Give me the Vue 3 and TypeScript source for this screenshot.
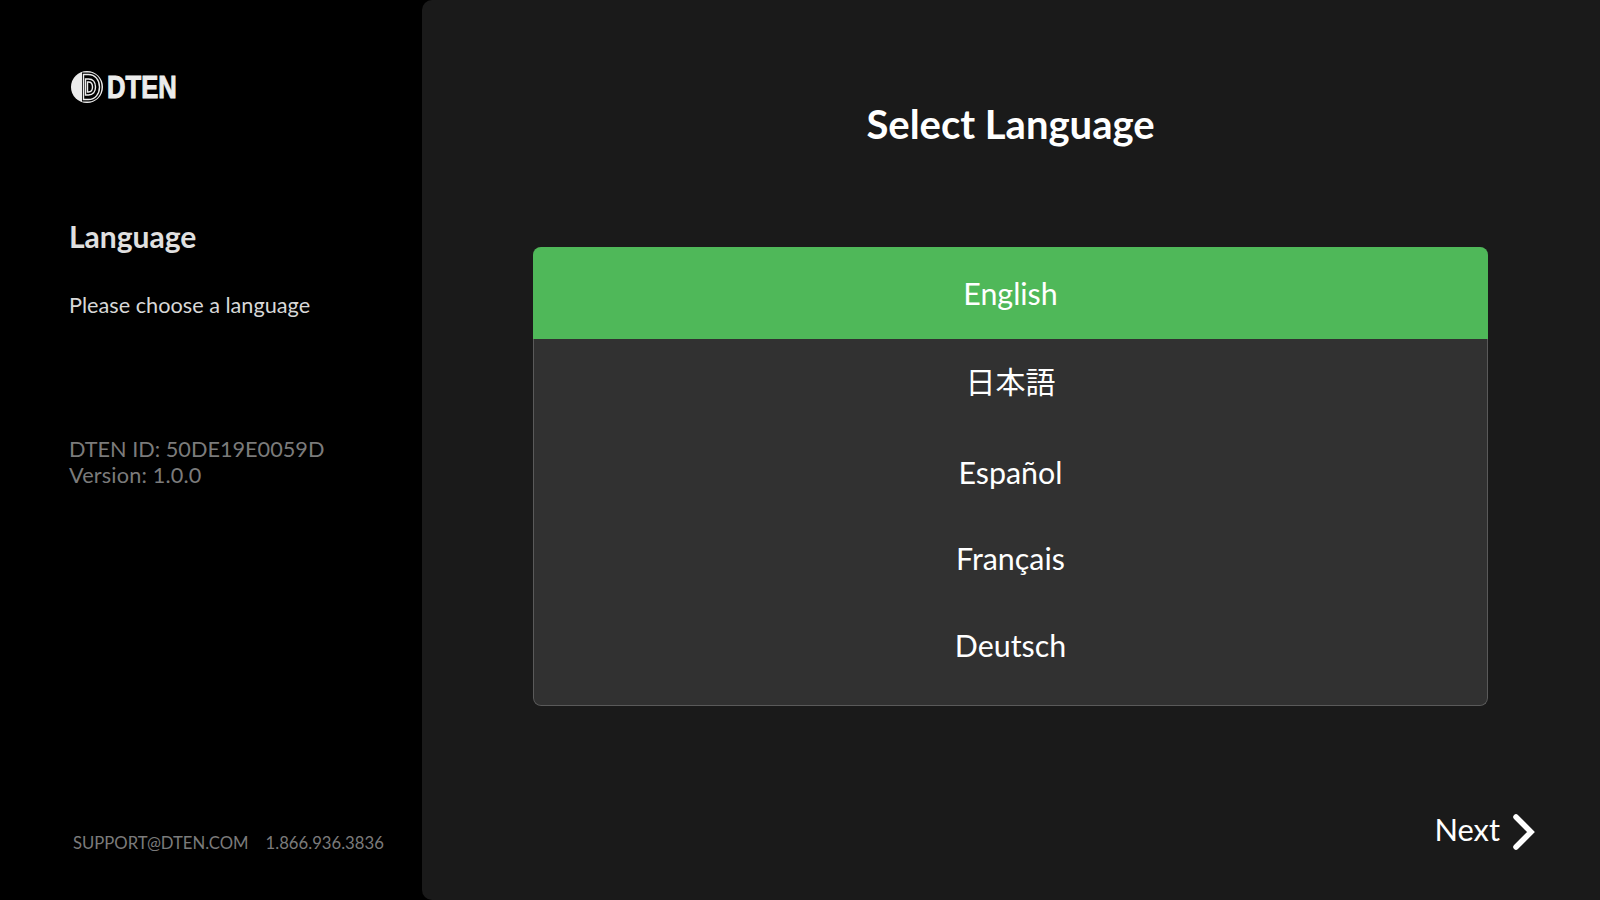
<script setup lang="ts">
const languages: string[] = ['English', '日本語', 'Español', 'Français', 'Deutsch']
</script>

<template>
  <div class="page">
    <aside class="side">
      <div class="logo">
        <svg class="mark" width="32" height="32" viewBox="0 0 32 32">
          <circle cx="16" cy="16" r="16" fill="#ececec" />
          <path d="M11 1.500h6.500c8 0 13 6.500 13 14.500s-5 14.500-13 14.500H11z" fill="#000" />
          <path d="M12.500 3.500h5c6.700 0 11 5.500 11 12.500s-4.300 12.500-11 12.500h-5z" fill="none" stroke="#ececec" stroke-width="1.400" />
          <path d="M14.500 8h3c4.500 0 7 3.300 7 8s-2.500 8-7 8h-3z" fill="none" stroke="#ececec" stroke-width="1.400" />
          <path d="M16.500 11h1c2.700 0 4 2.200 4 5s-1.300 5-4 5h-1z" fill="none" stroke="#ececec" stroke-width="1.400" />
        </svg>
        <span class="brand">DTEN</span>
      </div>
      <h2 class="heading">Language</h2>
      <p class="hint">Please choose a language</p>
      <div class="meta">
        <div>DTEN ID: 50DE19E0059D</div>
        <div class="version">Version: 1.0.0</div>
      </div>
      <div class="support">
        <span>SUPPORT@DTEN.COM</span>
        <span>1.866.936.3836</span>
      </div>
    </aside>
    <main class="main">
      <h1 class="title">Select Language</h1>
      <ul class="list">
        <li
          v-for="(lang, i) in languages"
          :key="lang"
          class="row"
          :class="{ active: i === 0 }"
        >{{ lang }}</li>
      </ul>
      <div class="next">
        <span>Next</span>
        <svg width="24" height="36" viewBox="0 0 24 36">
          <path d="M4 3l15 15L4 33" fill="none" stroke="#fff" stroke-width="5.500" stroke-linecap="round" stroke-linejoin="miter" />
        </svg>
      </div>
    </main>
  </div>
</template>

<style>
html, body { margin: 0; background: #000; }
</style>

<style scoped>
.page {
  display: flex;
  width: 1600px;
  height: 900px;
  overflow: hidden;
  background: #000;
  font-family: Lato, "Noto Sans CJK JP", sans-serif;
  color: #fff;
}
.side {
  width: 422px;
  flex: none;
  box-sizing: border-box;
  padding: 71px 0 0 69px;
  display: flex;
  flex-direction: column;
}
.logo { display: flex; align-items: center; gap: 4px; height: 32px; margin-left: 2px; }
.brand {
  font-family: "Liberation Sans", sans-serif;
  font-weight: 700;
  font-size: 32px;
  line-height: 32px;
  color: #ececec;
  display: inline-block;
  transform: scaleX(0.8);
  transform-origin: left center;
  -webkit-text-stroke: 1px #ececec;
}
.heading {
  margin: 115px 0 0;
  font-size: 30px;
  line-height: 36px;
  font-weight: 700;
  color: #e0e0e0;
}
.hint {
  margin: 37px 0 0;
  font-size: 21.700px;
  line-height: 28px;
  color: #d8d8d8;
}
.meta {
  margin-top: 117px;
  font-size: 21.700px;
  line-height: 26px;
  color: #7b7b7b;
}
.version { letter-spacing: 0.15px; }
.support {
  margin-top: auto;
  margin-bottom: 46px;
  margin-left: 4px;
  display: flex;
  gap: 17px;
  font-size: 16.700px;
  line-height: 22px;
  color: #7b7b7b;
}
.main {
  flex: 1;
  box-sizing: border-box;
  padding-right: 1px;
  background: #1a1a1a;
  border-radius: 10px 0 0 10px;
  display: flex;
  flex-direction: column;
  align-items: center;
  position: relative;
}
.title {
  margin: 99px 0 0;
  font-size: 40px;
  line-height: 50px;
  font-weight: 700;
}
.list {
  list-style: none;
  margin: 98px 0 0;
  padding: 0;
  width: 955px;
  height: 459px;
  box-sizing: border-box;
  background: #313131;
  border-radius: 8px;
  overflow: hidden;
}
.row {
  height: 87.500px;
  box-sizing: border-box;
  display: flex;
  align-items: center;
  justify-content: center;
  font-size: 30.400px;
  color: #fff;
  border-left: 1px solid #5a5a5a;
  border-right: 1px solid #5a5a5a;
}
.row.active {
  height: 92px;
  background: #4fb859;
  border: none;
}
.row:nth-child(2) { padding-bottom: 5px; font-size: 30px; }
.row:nth-child(3) { padding-top: 4px; }
.row:nth-child(4) { padding-top: 1px; }
.row:last-child {
  height: 104.500px;
  padding-bottom: 17px;
  border-bottom: 1px solid #5a5a5a;
  border-radius: 0 0 8px 8px;
}
.next {
  position: absolute;
  right: 64px;
  bottom: 50px;
  display: flex;
  align-items: center;
  gap: 12px;
  font-size: 30.800px;
}
.next span { line-height: 30px; margin-bottom: 4px; }
</style>
